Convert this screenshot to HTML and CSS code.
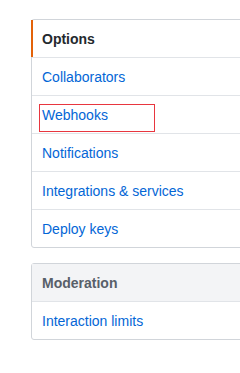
FILE: index.html
```html
<!DOCTYPE html>
<html lang="en">
  <head>
    <meta charset="UTF-8" />
    <title>Settings</title>
    <link rel="stylesheet" href="styles.css">
  </head>
  <body>
    <div class="sidebar">
      <nav class="menu">
        <a class="menu-item selected" href="#">Options</a>
        <a class="menu-item" href="#">Collaborators</a>
        <a class="menu-item marked" href="#">Webhooks</a>
        <a class="menu-item" href="#">Notifications</a>
        <a class="menu-item" href="#">Integrations &amp; services</a>
        <a class="menu-item" href="#">Deploy keys</a>
      </nav>
      <nav class="menu">
        <div class="menu-heading">Moderation</div>
        <a class="menu-item" href="#">Interaction limits</a>
      </nav>
    </div>
  </body>
</html>
```

FILE: styles.css
```css
html, body {
    margin: 0;
    background: #fff;
}
.sidebar {
    padding: 19px 0 0 31px;
    font-family: "Liberation Sans", Arial, sans-serif;
    font-size: 14px;
    overflow: hidden;
}
.menu {
    margin-right: -12px;
    margin-bottom: 15px;
    border: 1px solid #d1d5da;
    border-radius: 3px;
    background: #fff;
}
.menu-item, .menu-heading {
    position: relative;
    display: block;
    height: 37px;
    line-height: 38px;
    padding: 0 10px;
    border-bottom: 1px solid #e1e4e8;
    color: #0366d6;
    text-decoration: none;
}
.menu-item:last-child {
    border-bottom: none;
}
.menu-heading {
    font-weight: 600;
    color: #586069;
    background: #f3f4f6;
}
.selected {
    font-weight: 600;
    color: #24292e;
}
.selected::before {
    content: "";
    position: absolute;
    top: 0;
    bottom: 0;
    left: -1px;
    width: 2px;
    background: #e36209;
}
.marked::after {
    content: "";
    position: absolute;
    left: 7px;
    top: 8px;
    width: 114px;
    height: 26px;
    border: 1px solid #e8363f;
}
```
